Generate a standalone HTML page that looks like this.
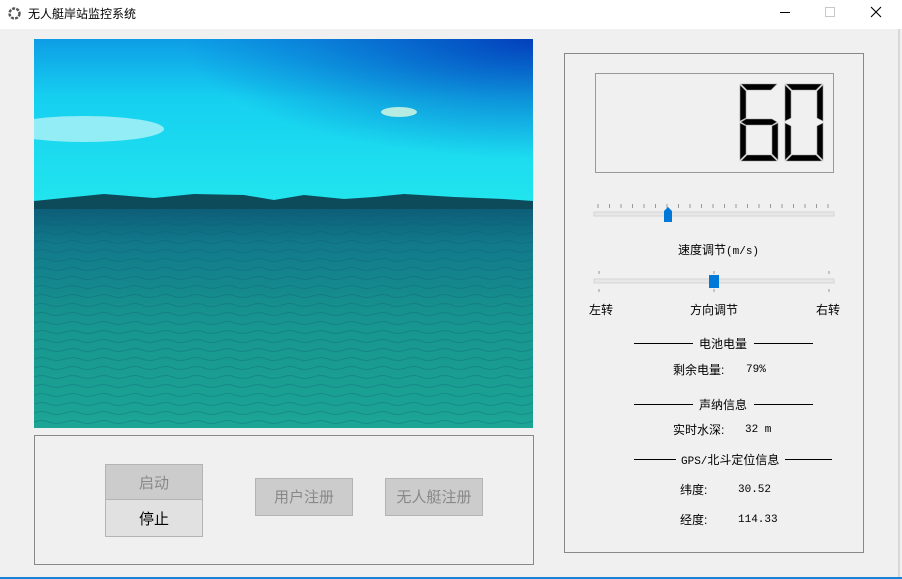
<!DOCTYPE html>
<html><head><meta charset="utf-8"><style>
*{margin:0;padding:0;box-sizing:border-box}
body{width:902px;height:579px;background:#f0f0f0;position:relative;overflow:hidden;font-family:"Liberation Sans","Noto Sans CJK SC",sans-serif;font-size:12px;color:#000}
.a{position:absolute;white-space:nowrap}
.tb{left:0;top:0;width:902px;height:29px;background:#fff}
.btn{position:absolute;background:#cccccc;border:1px solid #b4b4b4;color:#888;font-size:15px;text-align:center}
.line{position:absolute;height:1px;background:#000}
.m{font-family:"Liberation Mono","Noto Sans CJK SC",monospace;font-size:11px}
</style></head><body>
<div class="a tb"></div>
<svg class="a" style="left:8px;top:7px" width="13" height="13" viewBox="0 0 13 13"><circle cx="6.5" cy="6.5" r="5" fill="none" stroke="#555" stroke-width="2.4" stroke-dasharray="3 1.2"/></svg>
<div class="a" style="left:28px;top:5px;font-size:12px">无人艇岸站监控系统</div>
<div class="a" style="left:780px;top:12px;width:10px;height:1px;background:#000"></div>
<div class="a" style="left:825px;top:7px;width:10px;height:10px;border:1px solid #c8c8c8"></div>
<svg class="a" style="left:870px;top:6px" width="12" height="12"><path d="M1 1L11 11M11 1L1 11" stroke="#000" stroke-width="1.1"/></svg>
<div class="a" style="left:898px;top:29px;width:2px;height:550px;background:#d8d8d8"></div>
<div class="a" style="left:0;top:577px;width:902px;height:2px;background:#1883d7"></div>

<svg class="a" style="left:34px;top:39px" width="499" height="389" viewBox="0 0 499 389">
<defs>
<linearGradient id="sky" x1="0" y1="0" x2="0" y2="1"><stop offset="0" stop-color="#0e9de6"/><stop offset="0.35" stop-color="#16d0f0"/><stop offset="1" stop-color="#22e6ee"/></linearGradient>
<radialGradient id="tr" cx="1" cy="0" r="0.7"><stop offset="0" stop-color="#0028b0" stop-opacity="0.8"/><stop offset="1" stop-color="#0040c0" stop-opacity="0"/></radialGradient>
<linearGradient id="sea" x1="0" y1="0" x2="0" y2="1"><stop offset="0" stop-color="#0d5e78"/><stop offset="0.15" stop-color="#11788a"/><stop offset="0.5" stop-color="#17948f"/><stop offset="1" stop-color="#1ca595"/></linearGradient>
<pattern id="w" width="31" height="9" patternUnits="userSpaceOnUse"><path d="M0 5Q8 2 15 5T31 5" fill="none" stroke="#0a5a6e" stroke-width="1" opacity="0.3"/></pattern>
</defs>
<rect width="499" height="170" fill="url(#sky)"/>
<rect width="499" height="170" fill="url(#tr)"/>
<ellipse cx="50" cy="90" rx="80" ry="13" fill="#c8f6f8" opacity="0.7"/>
<ellipse cx="365" cy="73" rx="18" ry="5" fill="#e0fae0" opacity="0.8"/>
<path d="M0 162L40 158L70 155L120 159L160 155L210 156L240 161L270 156L310 160L340 158L370 155L420 158L470 160L499 162L499 175L0 175Z" fill="#0d4a5a"/>
<rect y="170" width="499" height="219" fill="url(#sea)"/>
<rect y="172" width="499" height="217" fill="url(#w)"/>
</svg>

<div class="a" style="left:34px;top:435px;width:500px;height:130px;border:1px solid #888"></div>
<div class="btn" style="left:105px;top:464px;width:98px;height:36px;line-height:38px">启动</div>
<div class="btn" style="left:105px;top:499px;width:98px;height:38px;line-height:40px;background:#e1e1e1;color:#000">停止</div>
<div class="btn" style="left:255px;top:478px;width:98px;height:38px;line-height:38px">用户注册</div>
<div class="btn" style="left:385px;top:478px;width:98px;height:38px;line-height:38px">无人艇注册</div>

<div class="a" style="left:564px;top:53px;width:300px;height:500px;border:1px solid #888"></div>
<div class="a" style="left:595px;top:73px;width:239px;height:100px;border:1px solid #999"></div>
<svg class="a" style="left:0;top:0" width="902" height="579">
<g fill="#000" stroke="#999" stroke-width="0.6">
<g transform="translate(740,84)">
<polygon points="1,0 37,0 31,6 7,6"/><polygon points="0,1 6,7 6,34 0,37"/>
<polygon points="1,38 6,35 32,35 37,38 32,41 6,41"/><polygon points="0,39 6,42 6,70 0,76"/>
<polygon points="1,77 7,71 31,71 37,77"/><polygon points="38,39 32,42 32,70 38,76"/>
</g>
<g transform="translate(785,84)">
<polygon points="1,0 37,0 31,6 7,6"/><polygon points="0,1 6,7 6,34 0,37"/><polygon points="38,1 32,7 32,34 38,37"/>
<polygon points="0,39 6,42 6,70 0,76"/><polygon points="38,39 32,42 32,70 38,76"/>
<polygon points="1,77 7,71 31,71 37,77"/>
</g></g>
<g stroke="#999" stroke-width="1">
<path d="M598 204v4M609.5 204v4M621 204v4M632.5 204v4M644 204v4M655.5 204v4M667 204v4M678.5 204v4M690 204v4M701.5 204v4M713 204v4M724.5 204v4M736 204v4M747.5 204v4M759 204v4M770.5 204v4M782 204v4M793.5 204v4M805 204v4M816.5 204v4M828 204v4"/>
<path d="M599 271v3M714 271v3M829 271v3M599 289v3M714 289v3M829 289v3"/>
</g>
<rect x="594" y="212" width="240" height="4" fill="#e7e7e7" stroke="#d4d4d4"/>
<polygon points="664,211 668,207 672,211 672,222 664,222" fill="#0078d7"/>
<rect x="594" y="279" width="240" height="4" fill="#e7e7e7" stroke="#d4d4d4"/>
<rect x="709" y="275" width="10" height="13" fill="#0078d7"/>
</svg>
<div class="a" style="left:678px;top:241px">速度调节<span class="m">(m/s)</span></div>
<div class="a" style="left:589px;top:301px">左转</div>
<div class="a" style="left:690px;top:301px">方向调节</div>
<div class="a" style="left:816px;top:301px">右转</div>

<div class="line" style="left:634px;top:343px;width:59px"></div>
<div class="a" style="left:699px;top:335px">电池电量</div>
<div class="line" style="left:754px;top:343px;width:59px"></div>
<div class="a" style="left:673px;top:361px">剩余电量:</div>
<div class="a m" style="left:746px;top:364px">79%</div>

<div class="line" style="left:634px;top:404px;width:59px"></div>
<div class="a" style="left:699px;top:396px">声纳信息</div>
<div class="line" style="left:754px;top:404px;width:59px"></div>
<div class="a" style="left:673px;top:421px">实时水深:</div>
<div class="a m" style="left:745px;top:424px">32 m</div>

<div class="line" style="left:634px;top:459px;width:42px"></div>
<div class="a" style="left:681px;top:451px"><span class="m">GPS/</span>北斗定位信息</div>
<div class="line" style="left:785px;top:459px;width:47px"></div>
<div class="a" style="left:680px;top:481px">纬度:</div>
<div class="a m" style="left:738px;top:484px">30.52</div>
<div class="a" style="left:680px;top:511px">经度:</div>
<div class="a m" style="left:738px;top:514px">114.33</div>
</body></html>
